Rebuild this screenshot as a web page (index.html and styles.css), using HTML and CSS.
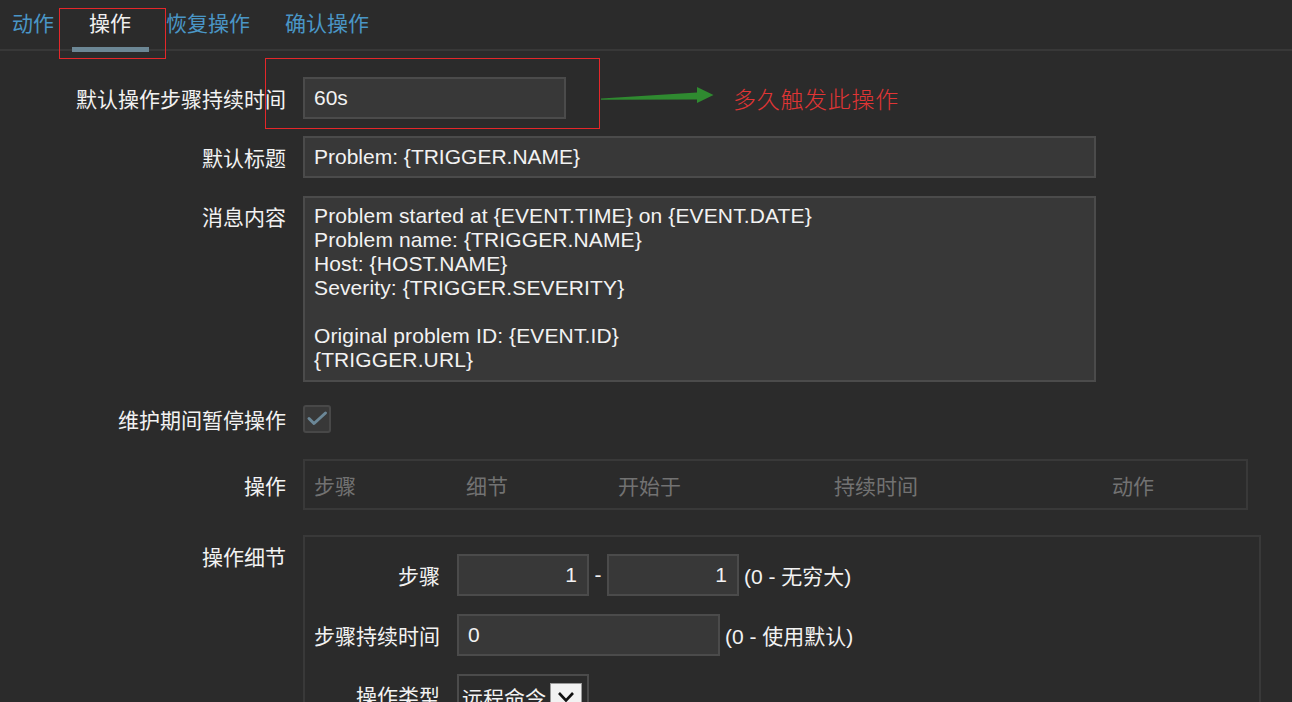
FILE: index.html
```html
<!DOCTYPE html>
<html lang="zh">
<head>
<meta charset="utf-8">
<title>操作</title>
<link rel="stylesheet" href="styles.css">
</head>
<body>
<div class="page">
  <nav class="tabs">
    <span class="tab">动作</span>
    <span class="tab active">操作</span>
    <span class="tab">恢复操作</span>
    <span class="tab">确认操作</span>
  </nav>

  <form class="form">
    <div class="row r1">
      <label class="lbl">默认操作步骤持续时间</label>
      <input class="field short" type="text" value="60s">
    </div>
    <div class="row r2">
      <label class="lbl">默认标题</label>
      <input class="field wide" type="text" value="Problem: {TRIGGER.NAME}">
    </div>
    <div class="row r3 top">
      <label class="lbl lbl-top">消息内容</label>
      <textarea class="field wide area">Problem started at {EVENT.TIME} on {EVENT.DATE}
Problem name: {TRIGGER.NAME}
Host: {HOST.NAME}
Severity: {TRIGGER.SEVERITY}

Original problem ID: {EVENT.ID}
{TRIGGER.URL}</textarea>
    </div>
    <div class="row r4">
      <label class="lbl">维护期间暂停操作</label>
      <span class="checkbox">
        <svg width="28" height="28" viewBox="0 0 28 28"><path d="M6 13.5 L11 18.5 L22.5 8" fill="none" stroke="#6b8797" stroke-width="3" stroke-linecap="round" stroke-linejoin="round"/></svg>
      </span>
    </div>
    <div class="row r5">
      <label class="lbl">操作</label>
      <div class="optable">
        <span class="th c1">步骤</span>
        <span class="th c2">细节</span>
        <span class="th c3">开始于</span>
        <span class="th c4">持续时间</span>
        <span class="th c5">动作</span>
      </div>
    </div>
    <div class="row r6 top">
      <label class="lbl lbl-top2">操作细节</label>
      <div class="details">
        <div class="drow">
          <span class="dlbl">步骤</span>
          <input class="field num" type="text" value="1">
          <span class="sep">-</span>
          <input class="field num" type="text" value="1">
          <span class="hint">(0 - 无穷大)</span>
        </div>
        <div class="drow">
          <span class="dlbl">步骤持续时间</span>
          <input class="field short" type="text" value="0">
          <span class="hint">(0 - 使用默认)</span>
        </div>
        <div class="drow">
          <span class="dlbl">操作类型</span>
          <div class="select">
            <span class="sel-text">远程命令</span>
            <span class="sel-btn">
              <svg width="20" height="14" viewBox="0 0 20 14"><path d="M3 3 L10 10.5 L17 3" fill="none" stroke="#111" stroke-width="2.6" stroke-linejoin="miter"/></svg>
            </span>
          </div>
        </div>
      </div>
    </div>
  </form>

  <div class="note-box note-tab"></div>
  <div class="note-box note-input"></div>
  <svg class="note-arrow" width="120" height="24" viewBox="596 84 120 24">
    <polygon points="601,98.6 697,92.6 697,87 713.5,95 697,103 697,99.6 601,99.8" fill="#2f8a30"/>
  </svg>
  <span class="note-text">多久触发此操作</span>
</div>
</body>
</html>
```

FILE: styles.css
```css
html, body {
  margin: 0;
  padding: 0;
  background: #2b2b2b;
  overflow: hidden;
}

body {
  font-family: "Liberation Sans", "Noto Sans CJK SC", sans-serif;
  font-size: 21px;
  color: #f2f2f2;
}

.page {
  position: relative;
  width: 1292px;
  height: 702px;
  overflow: hidden;
}

/* tabs */
.tabs {
  display: flex;
  height: 51px;
  box-sizing: border-box;
  border-bottom: 2px solid #383838;
  margin-left: -5.5px;
}

.tab {
  position: relative;
  padding: 0 17.5px;
  line-height: 45px;
  color: #4a96c6;
  font-family: "Noto Sans CJK SC", sans-serif;
}

.tab.active {
  color: #f0f0f0;
}

.tab.active::after {
  content: "";
  position: absolute;
  left: 0;
  right: 0;
  bottom: -3px;
  height: 5px;
  background: #6c8795;
}

/* form */
.form {
  display: flex;
  flex-direction: column;
  padding-top: 26px;
}

.row {
  display: flex;
  align-items: center;
  gap: 17px;
}

.row.top {
  align-items: flex-start;
}

.r2 { margin-top: 17px; }
.r3 { margin-top: 18px; }
.r4 { margin-top: 23px; }
.r5 { margin-top: 26px; }
.r6 { margin-top: 25px; }

.lbl {
  width: 286px;
  flex: none;
  text-align: right;
  line-height: 24px;
  font-family: "Noto Sans CJK SC", sans-serif;
  color: #f2f2f2;
}

.lbl-top { padding-top: 8px; }
.lbl-top2 { padding-top: 9px; }

.field {
  box-sizing: border-box;
  height: 42px;
  background: #383838;
  border: 2px solid #4b4b4b;
  color: #f2f2f2;
  font-family: "Liberation Sans", "Noto Sans CJK SC", sans-serif;
  font-size: 21px;
  padding: 0 9px;
  margin: 0;
  outline: none;
  border-radius: 0;
}

.short { width: 263px; }
.wide { width: 793px; }

.area {
  height: 186px;
  resize: none;
  overflow: hidden;
  line-height: 24px;
  padding: 6px 9px;
  display: block;
  letter-spacing: 0.12px;
}

.checkbox {
  box-sizing: border-box;
  width: 28px;
  height: 28px;
  border: 2px solid #484848;
  border-radius: 3px;
  background: #383838;
  display: flex;
  align-items: center;
  justify-content: center;
}

.checkbox svg {
  flex: none;
}

/* operations table */
.optable {
  box-sizing: border-box;
  width: 945px;
  height: 51px;
  border: 2px solid #393939;
  display: grid;
  grid-template-columns: 152px 152px 216px 278px 1fr;
  align-items: center;
  padding: 0 0 0 9px;
  font-family: "Noto Sans CJK SC", sans-serif;
  color: #727272;
}

/* details */
.details {
  box-sizing: border-box;
  width: 958px;
  height: 220px;
  border: 2px solid #393939;
  border-bottom: none;
  padding: 17px 0 0 9px;
  display: flex;
  flex-direction: column;
  gap: 18px;
}

.drow {
  display: flex;
  align-items: center;
}

.dlbl {
  width: 126px;
  flex: none;
  text-align: right;
  margin-right: 17px;
  font-family: "Noto Sans CJK SC", sans-serif;
  line-height: 24px;
}

.num {
  width: 132px;
  text-align: right;
  padding-right: 10px;
}

.sep {
  width: 18px;
  text-align: center;
}

.hint {
  margin-left: 5px;
}

.select {
  box-sizing: border-box;
  width: 132px;
  height: 42px;
  border: 2px solid #4b4b4b;
  background: #2b2b2b;
  display: flex;
  align-items: center;
  padding: 4px 5px 0 3px;
  gap: 4px;
}

.sel-text {
  font-family: "Noto Sans CJK SC", sans-serif;
  line-height: 24px;
  white-space: nowrap;
}

.sel-btn {
  box-sizing: border-box;
  width: 32px;
  height: 28px;
  flex: none;
  background: #f2f2f2;
  border: 1px solid #9a9a9a;
  display: flex;
  align-items: center;
  justify-content: center;
}

/* annotations */
.note-box {
  position: absolute;
  border: 1px solid #e5272a;
  box-sizing: border-box;
}

.note-tab {
  left: 59px;
  top: 8px;
  width: 107px;
  height: 51px;
}

.note-input {
  left: 265px;
  top: 58px;
  width: 335px;
  height: 71px;
}

.note-arrow {
  position: absolute;
  left: 596px;
  top: 84px;
}

.note-text {
  position: absolute;
  left: 733px;
  top: 84px;
  font-family: "Noto Sans CJK SC", sans-serif;
  font-weight: 300;
  font-size: 23px;
  line-height: 28px;
  letter-spacing: 0.7px;
  color: #e03535;
}
```
